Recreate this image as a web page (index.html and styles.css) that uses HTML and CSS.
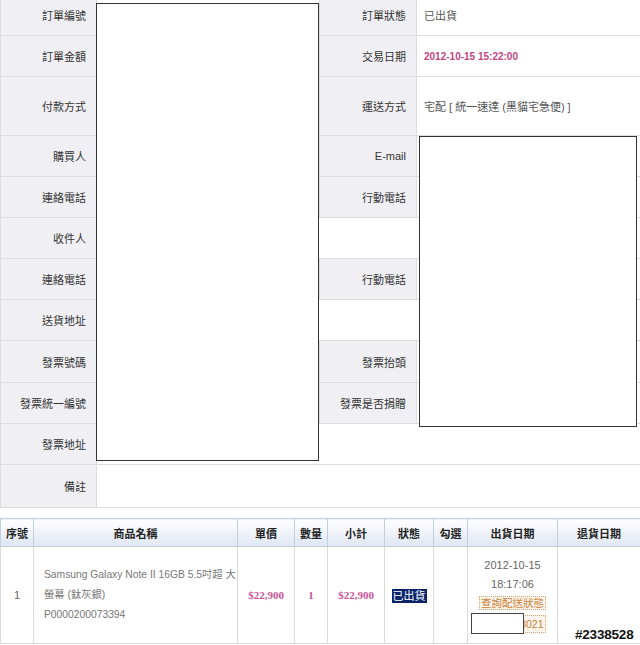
FILE: index.html
```html
<!DOCTYPE html>
<html lang="zh-Hant">
<head>
  <meta charset="UTF-8" />
  <title>訂單明細</title>
  <link rel="stylesheet" href="styles.css">
</head>
<body>

  <div class="page">
    <!-- 訂單資料 -->
    <table class="info">
      <colgroup>
        <col class="col-label">
        <col class="col-value">
        <col class="col-label-r">
        <col class="col-value-r">
      </colgroup>
      <tr class="row"><th>訂單編號</th><td></td><th>訂單狀態</th><td>已出貨</td></tr>
      <tr class="row"><th>訂單金額</th><td></td><th>交易日期</th><td><span class="date">2012-10-15 15:22:00</span></td></tr>
      <tr class="row tall"><th>付款方式</th><td></td><th>運送方式</th><td>宅配 [ 統一速達 (黑貓宅急便) ]</td></tr>
      <tr class="row"><th>購買人</th><td></td><th>E-mail</th><td></td></tr>
      <tr class="row"><th>連絡電話</th><td></td><th>行動電話</th><td></td></tr>
      <tr class="row"><th>收件人</th><td colspan="3"></td></tr>
      <tr class="row"><th>連絡電話</th><td></td><th>行動電話</th><td></td></tr>
      <tr class="row"><th>送貨地址</th><td colspan="3"></td></tr>
      <tr class="row r42"><th>發票號碼</th><td></td><th>發票抬頭</th><td></td></tr>
      <tr class="row"><th>發票統一編號</th><td></td><th>發票是否捐贈</th><td></td></tr>
      <tr class="row"><th>發票地址</th><td colspan="3"></td></tr>
      <tr class="row r43"><th>備註</th><td colspan="3"></td></tr>
    </table>

    <!-- 商品清單 -->
    <table class="items">
      <colgroup>
        <col style="width:33px"><col style="width:204px"><col style="width:57px">
        <col style="width:33px"><col style="width:57px"><col style="width:49px">
        <col style="width:34px"><col style="width:90px"><col style="width:83px">
      </colgroup>
      <thead>
        <tr>
          <th>序號</th><th>商品名稱</th><th>單價</th><th>數量</th><th>小計</th>
          <th>狀態</th><th>勾選</th><th>出貨日期</th><th>退貨日期</th>
        </tr>
      </thead>
      <tbody>
        <tr>
          <td>1</td>
          <td class="name">Samsung Galaxy Note II 16GB 5.5吋超 大<br>螢幕 (鈦灰銀)<br>P0000200073394</td>
          <td><span class="price">$22,900</span></td>
          <td><span class="price">1</span></td>
          <td><span class="price">$22,900</span></td>
          <td><span class="status">已出貨</span></td>
          <td></td>
          <td class="ship">
            2012-10-15<br>18:17:06<br>
            <span class="track">查詢配送狀態</span><br>
            <span class="track track-no">3021</span>
          </td>
          <td></td>
        </tr>
      </tbody>
    </table>

    <!-- 遮蔽區塊 -->
    <div class="mask mask-left"></div>
    <div class="mask mask-right"></div>
    <div class="mask mask-track"></div>
    <div class="watermark">#2338528</div>
  </div>

</body>
</html>
```

FILE: styles.css
```css
html, body {
  margin: 0;
  padding: 0;
  background: #fff;
  font-family: "Liberation Sans", "Noto Sans CJK TC", sans-serif;
  font-size: 11px;
  color: #333;
}

.page {
  position: relative;
  width: 640px;
  height: 645px;
  overflow: hidden;
}

/* ---- 訂單資料 ---- */
.info {
  width: 640px;
  margin-top: -6px;          /* 頁面已捲動 */
  border-collapse: collapse;
  table-layout: fixed;
}

.col-label   { width: 96px; }
.col-value   { width: 223px; }
.col-label-r { width: 97px; }
.col-value-r { width: 224px; }

.info th,
.info td {
  border: 1px solid #dcdce0;
  padding: 0;
  vertical-align: middle;
}

.info th {
  background: #f0f0f4;
  font-weight: normal;
  text-align: right;
  padding-right: 10px;
  color: #333;
}

.info td {
  background: #fff;
  color: #555;
  padding-left: 7px;
}

.row     { height: 41px; }
.row.tall { height: 59px; }
.row.r42 { height: 42px; }
.row.r43 { height: 43px; }

.date {
  color: #c2457f;
  font-weight: bold;
  font-size: 10px;
}

/* ---- 商品清單 ---- */
.items {
  width: 640px;
  margin-top: 10px;
  border-collapse: collapse;
  table-layout: fixed;
}

.items th {
  height: 27px;
  padding: 0;
  background: linear-gradient(#ffffff, #dfe6f3);
  border: 1px solid #c5cedd;
  color: #222;
  font-weight: bold;
  font-size: 11px;
}

.items td {
  height: 96px;
  padding: 0;
  border: 1px solid #dadada;
  text-align: center;
  vertical-align: middle;
  color: #666;
}

.items td.name {
  text-align: left;
  padding-left: 10px;
  font-size: 10.3px;
  line-height: 20px;
  white-space: nowrap;
  color: #777;
}

.price {
  font-family: "Liberation Serif", serif;
  font-weight: bold;
  color: #c9559a;
}

.status {
  background: #0a246a;
  color: #fff;
  padding: 1px 1px;
}

.ship {
  line-height: 19px;
  color: #777;
}

.track {
  display: inline-block;
  line-height: 12px;
  padding: 0 1px;
  font-size: 10.5px;
  color: #c8823a;
  background: #fbf4ea;
  border: 1px dotted #d4a878;
}

.track-no {
  width: 62px;
  text-align: right;
  line-height: 16px;
  margin-top: 2px;
}

/* ---- 遮蔽 / 浮水印 ---- */
.mask {
  position: absolute;
  background: #fff;
  border: 1px solid #333;
  box-sizing: border-box;
}

.mask-left  { left: 96px;  top: 3px;   width: 223px; height: 458px; }
.mask-right { left: 419px; top: 136px; width: 218px; height: 291px; }
.mask-track { left: 471px; top: 613px; width: 53px;  height: 21px; border-color: #444; }

.watermark {
  position: absolute;
  left: 575px;
  top: 627px;
  font-family: "Liberation Sans", sans-serif;
  font-size: 13.5px;
  font-weight: bold;
  letter-spacing: -0.2px;
  color: #111;
  text-shadow: 1px 0 #fff, -1px 0 #fff, 0 1px #fff, 0 -1px #fff,
               1px 1px #fff, -1px -1px #fff, 1px -1px #fff, -1px 1px #fff;
}
```
